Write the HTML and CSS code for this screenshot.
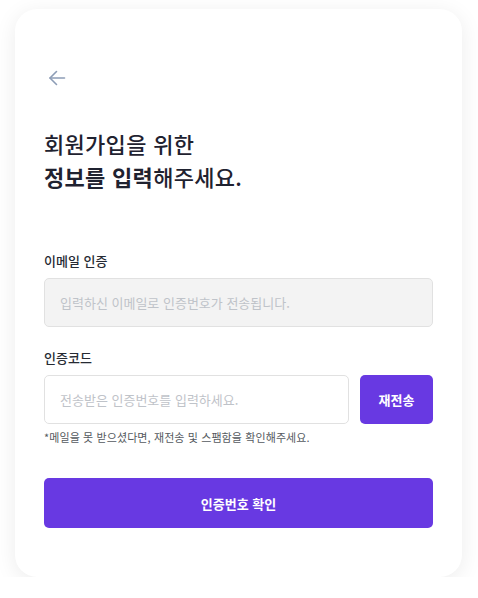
FILE: index.html
```html
<!DOCTYPE html>
<html lang="ko">
<head>
    <meta charset="UTF-8">
    <meta name="viewport" content="width=device-width, initial-scale=1.0">
    <title>회원가입</title>
    <link rel="stylesheet" href="styles.css">
</head>
<body>
    <div class="card">
        <!-- Back -->
        <button class="back" type="button" aria-label="뒤로가기">
            <svg width="24" height="24" viewBox="0 0 24 24" fill="none" stroke="#8d9db6" stroke-width="1.6" stroke-linecap="round" stroke-linejoin="round">
                <path d="M19.5 12H5"/>
                <path d="M11.5 5.5L5 12l6.5 6.5"/>
            </svg>
        </button>

        <h1 class="title">회원가입을 위한<br><strong>정보를 입력</strong>해주세요.</h1>

        <!-- Email -->
        <div class="form-group">
            <label for="email">이메일 인증</label>
            <input type="text" id="email" class="input-disabled" placeholder="입력하신 이메일로 인증번호가 전송됩니다." disabled>
        </div>

        <!-- Code -->
        <div class="form-group code-group">
            <label for="code">인증코드</label>
            <div class="code-row">
                <input type="text" id="code" placeholder="전송받은 인증번호를 입력하세요.">
                <button class="resend" type="button">재전송</button>
            </div>
            <p class="hint">*메일을 못 받으셨다면, 재전송 및 스팸함을 확인해주세요.</p>
        </div>

        <button class="submit" type="button">인증번호 확인</button>
    </div>
</body>
</html>
```

FILE: styles.css
```css
* {
    box-sizing: border-box;
}
body {
    margin: 0;
    padding: 9px 16px 0 15px;
    background-color: #ffffff;
    font-family: "Noto Sans CJK KR", "Noto Sans", sans-serif;
    color: #1f2230;
}
.card {
    width: 447px;
    height: 568px;
    padding: 57px 29px 0 29px;
    background-color: #fff;
    border-radius: 22px;
    box-shadow: 0 4px 22px rgba(0, 0, 0, 0.08);
}
.back {
    display: block;
    width: 24px;
    height: 24px;
    padding: 0;
    margin-left: 1px;
    border: none;
    background: none;
    cursor: pointer;
}
.title {
    margin: 37px 0 0 0;
    font-size: 22px;
    font-weight: 500;
    line-height: 33px;
    color: #1f2230;
    letter-spacing: 0.3px;
}
.title strong {
    font-weight: 700;
}
.form-group {
    margin-top: 59px;
}
.code-group {
    margin-top: 22px;
}
label {
    display: block;
    margin-bottom: 8px;
    font-size: 13px;
    line-height: 18px;
    font-weight: 500;
    color: #262a33;
}
input[type="text"] {
    width: 100%;
    height: 49px;
    padding: 0 15px;
    border: 1px solid #e1e1e1;
    border-radius: 5px;
    background-color: #fff;
    font-family: inherit;
    font-size: 13px;
    color: #333;
    outline: none;
}
input::placeholder {
    color: #bfc3c9;
}
.input-disabled {
    background-color: #f3f3f3 !important;
}
.code-row {
    display: flex;
    gap: 11px;
}
.code-row input[type="text"] {
    flex: 1;
}
.resend {
    flex: none;
    width: 73px;
    height: 49px;
    border: none;
    border-radius: 5px;
    background-color: #6839e2;
    color: #fff;
    font-family: inherit;
    font-size: 13px;
    font-weight: 700;
    cursor: pointer;
}
.hint {
    margin: 5px 0 0 0;
    font-size: 11px;
    line-height: 16px;
    letter-spacing: 0.1px;
    color: #555a60;
}
.submit {
    display: block;
    width: 100%;
    height: 50px;
    margin-top: 33px;
    border: none;
    border-radius: 5px;
    background-color: #6839e2;
    color: #fff;
    font-family: inherit;
    font-size: 13px;
    font-weight: 700;
    cursor: pointer;
}
```
